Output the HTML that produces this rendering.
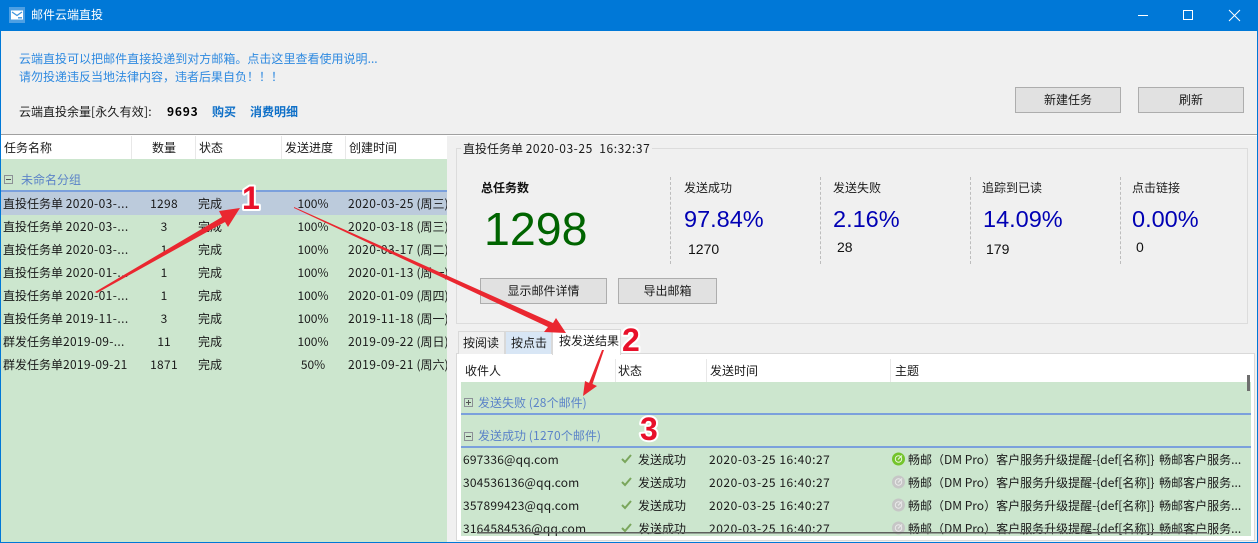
<!DOCTYPE html>
<html><head><meta charset="utf-8">
<style>
html,body{margin:0;padding:0;width:1258px;height:543px;overflow:hidden;background:#f0f0f0}
body{position:relative;font-family:"Noto Sans CJK SC","Liberation Sans",sans-serif;font-size:12px;color:#1a1a1a}
.a{position:absolute;white-space:nowrap;line-height:16px}
.b{position:absolute;box-sizing:border-box;background:#e1e1e1;border:1px solid #adadad;text-align:center;line-height:22px;font-size:12px}
.r{position:absolute;background:#cce6ce}
.c{text-align:center}
.v{position:absolute;width:0;border-left:1px dashed #bdbdbd}
.big{font-family:"Liberation Sans",sans-serif;font-size:23.5px;color:#0000b4;line-height:28px}
.n{font-family:"Liberation Sans",sans-serif;font-size:14px;color:#111}
.d{letter-spacing:.55px}
.t{letter-spacing:.42px}
.s{letter-spacing:.3px}
.e{letter-spacing:.18px}
.m{margin-left:2px}
</style></head><body>
<div style="position:absolute;left:0;top:0;width:1258px;height:31px;background:#0078d7"></div>
<div style="position:absolute;left:0;top:0;width:1px;height:543px;background:#0078d7"></div>
<div style="position:absolute;right:0;top:0;width:1px;height:543px;background:#0078d7"></div>
<div style="position:absolute;left:0;top:542px;width:1258px;height:1px;background:#0078d7"></div>
<svg style="position:absolute;left:9px;top:7px" width="16" height="16"><rect width="16" height="16" fill="#4d9fe3"/><path d="M2 3.500H14V12.500H2Z" fill="#fff"/><path d="M3 5L8 8.500L13 5M9 10.800H13" stroke="#3f95df" stroke-width="1.300" fill="none"/></svg>
<div class="a" style="left:31px;top:7px;color:#fff;font-size:12px">邮件云端直投</div>
<svg style="position:absolute;left:1130px;top:7px" width="125" height="18"><path d="M8 8.500H18" stroke="#fff" stroke-width="1"/><rect x="53.500" y="3.500" width="9" height="9" fill="none" stroke="#fff"/><path d="M99 3L110 14M110 3L99 14" stroke="#fff" stroke-width="1"/></svg>

<div class="a" style="left:19px;top:51px;color:#2f8ae0;letter-spacing:.02px">云端直投可以把邮件直接投递到对方邮箱。点击这里查看使用说明...</div>
<div class="a" style="left:19px;top:69px;color:#2f8ae0">请勿投递违反当地法律内容，违者后果自负！！！</div>
<div class="a" style="left:19px;top:104px">云端直投余量<span class="e">[永久有效]:</span></div>
<div class="a" style="left:167px;top:104px;font-weight:700;color:#000;letter-spacing:.8px">9693</div>
<div class="a" style="left:212px;top:104px;font-weight:700;color:#0f70c8">购买</div>
<div class="a" style="left:250px;top:104px;font-weight:700;color:#0f70c8">消费明细</div>
<div class="b" style="left:1015px;top:87px;width:106px;height:26px;line-height:24px">新建任务</div>
<div class="b" style="left:1138px;top:87px;width:106px;height:26px;line-height:24px">刷新</div>

<div style="position:absolute;left:1px;top:134px;width:1256px;height:1px;background:#a0a0a0"></div>
<div style="position:absolute;left:1px;top:135px;width:1256px;height:1px;background:#fff"></div>

<!-- left list -->
<div style="position:absolute;left:1px;top:136px;width:446px;height:23px;background:#fff"></div>
<div class="r" style="left:1px;top:159px;width:446px;height:383px"></div>
<div style="position:absolute;left:131px;top:136px;width:1px;height:23px;background:#e8e8e8"></div>
<div style="position:absolute;left:195px;top:136px;width:1px;height:23px;background:#e8e8e8"></div>
<div style="position:absolute;left:281px;top:136px;width:1px;height:23px;background:#e8e8e8"></div>
<div style="position:absolute;left:345px;top:136px;width:1px;height:23px;background:#e8e8e8"></div>
<div class="a" style="left:4px;top:140px">任务名称</div>
<div class="a" style="left:152px;top:140px">数量</div>
<div class="a" style="left:199px;top:140px">状态</div>
<div class="a" style="left:285px;top:140px">发送进度</div>
<div class="a" style="left:349px;top:140px">创建时间</div>
<svg style="position:absolute;left:4px;top:175px" width="10" height="10"><rect x=".5" y=".5" width="8" height="8" fill="none" stroke="#8c9096"/><path d="M2 4.500H7" stroke="#555"/></svg>
<div class="a" style="left:21px;top:172px;color:#5b83c8">未命名分组</div>
<div style="position:absolute;left:1px;top:190px;width:446px;height:2px;background:#7ba0dc"></div>
<div style="position:absolute;left:1px;top:192px;width:446px;height:23px;background:#bccbdc"></div>

<div style="position:absolute;left:0;top:196px;width:447px;height:192px;overflow:hidden">
<div class="a" style="left:3px;top:0">直投任务单 <span class="t">2020-03-...</span></div><div class="a c s" style="left:134px;top:0;width:60px">1298</div><div class="a" style="left:198px;top:0">完成</div><div class="a c" style="left:283px;top:0;width:60px">100%</div><div class="a" style="left:348px;top:0"><span class="t">2020-03-25</span> (周三)</div>
<div class="a" style="left:3px;top:23px">直投任务单 <span class="t">2020-03-...</span></div><div class="a c" style="left:134px;top:23px;width:60px">3</div><div class="a" style="left:198px;top:23px">完成</div><div class="a c" style="left:283px;top:23px;width:60px">100%</div><div class="a" style="left:348px;top:23px"><span class="t">2020-03-18</span> (周三)</div>
<div class="a" style="left:3px;top:46px">直投任务单 <span class="t">2020-03-...</span></div><div class="a c" style="left:134px;top:46px;width:60px">1</div><div class="a" style="left:198px;top:46px">完成</div><div class="a c" style="left:283px;top:46px;width:60px">100%</div><div class="a" style="left:348px;top:46px"><span class="t">2020-03-17</span> (周二)</div>
<div class="a" style="left:3px;top:69px">直投任务单 <span class="t">2020-01-...</span></div><div class="a c" style="left:134px;top:69px;width:60px">1</div><div class="a" style="left:198px;top:69px">完成</div><div class="a c" style="left:283px;top:69px;width:60px">100%</div><div class="a" style="left:348px;top:69px"><span class="t">2020-01-13</span> (周一)</div>
<div class="a" style="left:3px;top:92px">直投任务单 <span class="t">2020-01-...</span></div><div class="a c" style="left:134px;top:92px;width:60px">1</div><div class="a" style="left:198px;top:92px">完成</div><div class="a c" style="left:283px;top:92px;width:60px">100%</div><div class="a" style="left:348px;top:92px"><span class="t">2020-01-09</span> (周四)</div>
<div class="a" style="left:3px;top:115px">直投任务单 <span class="t">2019-11-...</span></div><div class="a c" style="left:134px;top:115px;width:60px">3</div><div class="a" style="left:198px;top:115px">完成</div><div class="a c" style="left:283px;top:115px;width:60px">100%</div><div class="a" style="left:348px;top:115px"><span class="t">2019-11-18</span> (周一)</div>
<div class="a" style="left:3px;top:138px">群发任务单<span class="s">2019-09-...</span></div><div class="a c" style="left:134px;top:138px;width:60px">11</div><div class="a" style="left:198px;top:138px">完成</div><div class="a c" style="left:283px;top:138px;width:60px">100%</div><div class="a" style="left:348px;top:138px"><span class="t">2019-09-22</span> (周日)</div>
<div class="a" style="left:3px;top:161px">群发任务单<span class="s">2019-09-21</span></div><div class="a c s" style="left:134px;top:161px;width:60px">1871</div><div class="a" style="left:198px;top:161px">完成</div><div class="a c" style="left:283px;top:161px;width:60px">50%</div><div class="a" style="left:348px;top:161px"><span class="t">2019-09-21</span> (周六)</div>
</div>

<!-- group box -->
<div style="position:absolute;left:456px;top:148px;width:792px;height:176px;box-sizing:border-box;border:1px solid #dcdcdc"></div>
<div class="a" style="left:461px;top:141px;padding:0 2px;background:#f0f0f0">直投任务单 <span class="d">2020-03-25&nbsp; 16:32:37</span></div>
<div class="a" style="left:481px;top:180px;font-weight:700;color:#111">总任务数</div>
<div class="a" style="left:484px;top:201px;font-family:'Liberation Sans',sans-serif;font-size:46.5px;line-height:56px;color:#006400">1298</div>
<div class="v" style="left:670px;top:177px;height:87px"></div>
<div class="v" style="left:820px;top:177px;height:87px"></div>
<div class="v" style="left:970px;top:177px;height:87px"></div>
<div class="v" style="left:1120px;top:177px;height:87px"></div>
<div class="a" style="left:684px;top:180px">发送成功</div>
<div class="a" style="left:833px;top:180px">发送失败</div>
<div class="a" style="left:982px;top:180px">追踪到已读</div>
<div class="a" style="left:1132px;top:180px">点击链接</div>
<div class="a big" style="left:684px;top:205px">97.84%</div>
<div class="a big" style="left:833px;top:205px">2.16%</div>
<div class="a big" style="left:983px;top:205px">14.09%</div>
<div class="a big" style="left:1132px;top:205px">0.00%</div>
<div class="a n" style="left:688px;top:241px">1270</div>
<div class="a n" style="left:837px;top:239px">28</div>
<div class="a n" style="left:986px;top:241px">179</div>
<div class="a n" style="left:1136px;top:239px">0</div>
<div class="b" style="left:480px;top:278px;width:127px;height:26px;line-height:24px">显示邮件详情</div>
<div class="b" style="left:618px;top:278px;width:99px;height:26px;line-height:24px">导出邮箱</div>

<!-- tabs -->
<div style="position:absolute;left:456px;top:353px;width:799px;height:188px;box-sizing:border-box;border:1px solid #d9d9d9;background:#fff"></div>
<div style="position:absolute;left:458px;top:331px;width:47px;height:23px;box-sizing:border-box;border:1px solid #d9d9d9;border-bottom:0;background:#f0f0f0"></div>
<div style="position:absolute;left:505px;top:331px;width:47px;height:23px;box-sizing:border-box;border:1px solid #d9d9d9;border-bottom:0;background:#d8e6f5"></div>
<div style="position:absolute;left:552px;top:329px;width:69px;height:26px;background:#fff;border:1px solid #d9d9d9;border-bottom:0;box-sizing:border-box"></div>
<div class="a" style="left:463px;top:335px">按阅读</div>
<div class="a" style="left:511px;top:335px">按点击</div>
<div class="a" style="left:559px;top:333px">按发送结果</div>

<div class="r" style="left:461px;top:382px;width:790px;height:154px"></div>
<div style="position:absolute;left:615px;top:359px;width:1px;height:23px;background:#e8e8e8"></div>
<div style="position:absolute;left:706px;top:359px;width:1px;height:23px;background:#e8e8e8"></div>
<div style="position:absolute;left:890px;top:359px;width:1px;height:23px;background:#e8e8e8"></div>
<div class="a" style="left:465px;top:363px">收件人</div>
<div class="a" style="left:618px;top:363px">状态</div>
<div class="a" style="left:710px;top:363px">发送时间</div>
<div class="a" style="left:895px;top:363px">主题</div>
<div style="position:absolute;left:1247px;top:375px;width:3px;height:16px;background:#6e6e6e"></div>
<svg style="position:absolute;left:464px;top:398px" width="10" height="10"><rect x=".5" y=".5" width="8" height="8" fill="none" stroke="#8c9096"/><path d="M2 4.500H7M4.500 2V7" stroke="#555"/></svg>
<div class="a" style="left:478px;top:395px;color:#5b83c8">发送失败 <span class="e">(28</span>个邮件)</div>
<div style="position:absolute;left:461px;top:413px;width:790px;height:2px;background:#7ba0dc"></div>
<svg style="position:absolute;left:464px;top:432px" width="10" height="10"><rect x=".5" y=".5" width="8" height="8" fill="none" stroke="#8c9096"/><path d="M2 4.500H7" stroke="#555"/></svg>
<div class="a" style="left:478px;top:428px;color:#5b83c8">发送成功 <span class="s">(1270</span>个邮件)</div>
<div style="position:absolute;left:461px;top:446px;width:790px;height:2px;background:#7ba0dc"></div>

<div style="position:absolute;left:461px;top:448px;width:790px;height:88px;overflow:hidden">
<div class="a e" style="left:2px;top:4px">697336@qq.com</div><div class="a" style="left:177px;top:4px">发送成功</div><div class="a d" style="left:248px;top:4px">2020-03-25 16:40:27</div><div class="a" style="left:447px;top:4px;width:342px;overflow:hidden">畅邮（DM Pro）客户服务升级提醒-{def[名称]} <span class="m">畅邮客户服务...</span></div>
<div class="a e" style="left:2px;top:27px">304536136@qq.com</div><div class="a" style="left:177px;top:27px">发送成功</div><div class="a d" style="left:248px;top:27px">2020-03-25 16:40:27</div><div class="a" style="left:447px;top:27px;width:342px;overflow:hidden">畅邮（DM Pro）客户服务升级提醒-{def[名称]} <span class="m">畅邮客户服务...</span></div>
<div class="a e" style="left:2px;top:50px">357899423@qq.com</div><div class="a" style="left:177px;top:50px">发送成功</div><div class="a d" style="left:248px;top:50px">2020-03-25 16:40:27</div><div class="a" style="left:447px;top:50px;width:342px;overflow:hidden">畅邮（DM Pro）客户服务升级提醒-{def[名称]} <span class="m">畅邮客户服务...</span></div>
<div class="a e" style="left:2px;top:73px">3164584536@qq.com</div><div class="a" style="left:177px;top:73px">发送成功</div><div class="a d" style="left:248px;top:73px">2020-03-25 16:40:27</div><div class="a" style="left:447px;top:73px;width:342px;overflow:hidden">畅邮（DM Pro）客户服务升级提醒-{def[名称]} <span class="m">畅邮客户服务...</span></div>
</div>

<svg style="position:absolute;left:0;top:0" width="1258" height="543">
<defs>
<g id="ck"><path d="M0 4L3 7L9 0" fill="none" stroke="#7aa65c" stroke-width="2"/></g>
<g id="gy"><circle cx="6.500" cy="6.500" r="6.500" fill="#c6c6c6"/><circle cx="6.500" cy="6.500" r="3.200" fill="none" stroke="#eaeaea" stroke-width="1"/><path d="M6 7L10 3" stroke="#eaeaea" stroke-width="1.200"/></g>
</defs>
<use href="#ck" x="622" y="455"/><use href="#ck" x="622" y="478"/><use href="#ck" x="622" y="501"/><use href="#ck" x="622" y="524"/>
<circle cx="898.500" cy="459" r="6.500" fill="#74c42c"/><circle cx="898.500" cy="459" r="3.200" fill="none" stroke="#e8f6da" stroke-width="1"/><path d="M898 459.500L902 455.500" stroke="#e8f6da" stroke-width="1.200"/>
<use href="#gy" x="892" y="475.500"/><use href="#gy" x="892" y="498.500"/><use href="#gy" x="892" y="521.500"/>
<rect x="477" y="532" width="730" height="1.500" fill="#5d5f5c"/>
<!-- arrows -->
<path d="M95 292L222 217L219 211L240 208L228 227L225 222L97 293Z" fill="#ea2730"/>
<path d="M294 207L553 323L556 318L566 333L544 332L548 327L294 208Z" fill="#ea2730"/>
<path d="M604 350L592.500 384L597 386L583 396L585 381L589 383L602 350Z" fill="#ea2730"/>
<g font-family="'Liberation Sans',sans-serif" font-weight="700" font-size="32" fill="#e8102a" stroke="#fff" stroke-width="4" paint-order="stroke" stroke-linejoin="round">
<text x="242" y="209">1</text><text x="622" y="351">2</text><text x="640" y="440">3</text>
</g>
</svg>
</body></html>
